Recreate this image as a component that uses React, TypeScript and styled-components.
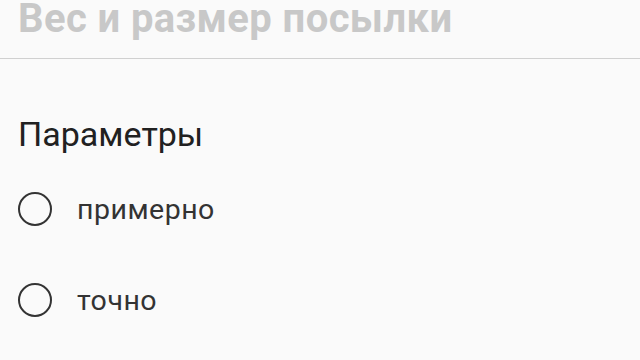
import styled, { createGlobalStyle } from 'styled-components';

const Global = createGlobalStyle`
  html, body {
    margin: 0;
    padding: 0;
    background: #fafafa;
  }
  body {
    font-family: Roboto, 'Noto Sans', sans-serif;
    width: 640px;
    height: 360px;
    overflow: hidden;
  }
`;

const S = {
  page: styled.div`
    display: flex;
    flex-direction: column;
    width: 640px;
  `,
  header: styled.div`
    height: 58px;
    border-bottom: 1.5px solid #d0d0d0;
    overflow: hidden;
  `,
  title: styled.h1`
    margin: -1px 0 0 18px;
    font-size: 40px;
    font-weight: 700;
    line-height: 40px;
    letter-spacing: 0.4px;
    color: #c8c8c8;
    white-space: nowrap;
  `,
  section: styled.div`
    display: flex;
    flex-direction: column;
    padding: 55px 18px 0;
  `,
  label: styled.div`
    font-size: 34px;
    line-height: 40px;
    color: #212121;
    margin-bottom: 38px;
  `,
  options: styled.div`
    display: flex;
    flex-direction: column;
    gap: 57px;
  `,
  option: styled.label`
    display: flex;
    align-items: center;
    gap: 25px;
    height: 34px;
    font-size: 28.5px;
    letter-spacing: 0.5px;
    color: #333;
  `,
  circle: styled.span`
    box-sizing: border-box;
    width: 34px;
    height: 34px;
    border-radius: 50%;
    border: 2.5px solid #333;
    flex-shrink: 0;
  `,
};

export default function App() {
  return (
    <>
      <Global />
      <S.page>
        <S.header>
          <S.title>Вес и размер посылки</S.title>
        </S.header>
        <S.section>
          <S.label>Параметры</S.label>
          <S.options>
            <S.option>
              <S.circle />
              примерно
            </S.option>
            <S.option>
              <S.circle />
              точно
            </S.option>
          </S.options>
        </S.section>
      </S.page>
    </>
  );
}
